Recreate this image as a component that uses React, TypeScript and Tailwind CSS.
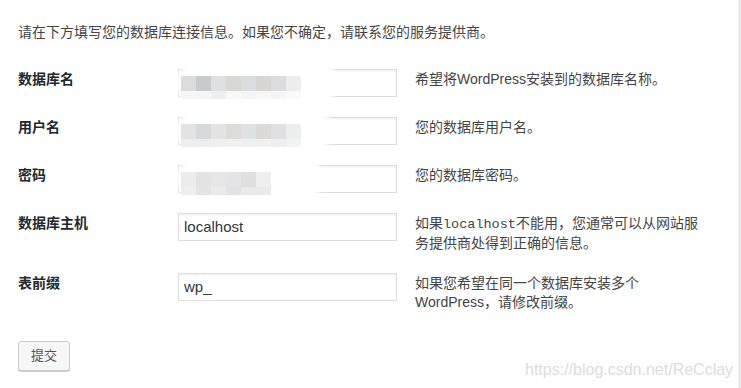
import React from 'react';

interface Field {
  id: number;
  label: string;
  value?: string;
  blur?: { cols: string[]; low: string[]; blob: number };
  desc: React.ReactNode;
}

const font = "font-['Liberation_Sans','Noto_Sans_CJK_SC',sans-serif]";

function BlurredValue({ cols, low, blob }: { cols: string[]; low: string[]; blob: number }) {
  return (
    <>
      {/* white smear over the border */}
      <div
        className="absolute -left-[3px] -top-[6px] h-[38px] rounded-full bg-white blur-[2px]"
        style={{ width: blob }}
      />
      <div className="absolute left-[2px] top-[6px] flex flex-col">
        <div className="flex">
          {cols.map((c, i) => (
            <span key={i} className="h-[15px] w-[15px]" style={{ background: c }} />
          ))}
        </div>
        <div className="flex">
          {low.map((c, i) => (
            <span key={i} className="h-[8px] w-[15px]" style={{ background: c }} />
          ))}
        </div>
      </div>
    </>
  );
}

export default function App() {
  const fields: Field[] = [
    {
      id: 1,
      label: '数据库名',
      blur: {
        cols: ['#dcdcdc', '#c8cbce', '#e0e0e0', '#d8d8d4', '#d9dde0', '#d9d5d5', '#dcdce0', '#ecedec'],
        low: ['#f6f6f6', '#f5f5f5', '#eeeeee', '#f8f8f8', '#f4f4f4', '#f7f7f7', '#f5f5f5', '#fafafa'],
        blob: 163,
      },
      desc: '希望将WordPress安装到的数据库名称。',
    },
    {
      id: 2,
      label: '用户名',
      blur: {
        cols: ['#e3e3e3', '#d5dadb', '#e3e3e3', '#dcdcd8', '#dde2e3', '#ddd9d9', '#dfdfe4', '#eceeed'],
        low: ['#eeeeee', '#ebedee', '#efefef', '#f0f0f0', '#eeeff0', '#f0f0f0', '#eeeeef', '#f3f3f3'],
        blob: 158,
      },
      desc: '您的数据库用户名。',
    },
    {
      id: 3,
      label: '密码',
      blur: {
        cols: ['#ececec', '#e3e3e3', '#e6e6e6', '#e4e4e4', '#dfdfdf', '#efefef'],
        low: ['#eeeeee', '#e4e4e6', '#ebeae8', '#e1e2e6', '#eae9ec', '#e9e9eb'],
        blob: 148,
      },
      desc: '您的数据库密码。',
    },
    {
      id: 4,
      label: '数据库主机',
      value: 'localhost',
      desc: (
        <>
          如果<code className="font-['Liberation_Mono',monospace] text-[13.5px]">localhost</code>
          不能用，您通常可以从网站服务提供商处得到正确的信息。
        </>
      ),
    },
    {
      id: 5,
      label: '表前缀',
      value: 'wp_',
      desc: '如果您希望在同一个数据库安装多个WordPress，请修改前缀。',
    },
  ];

  return (
    <div className={`relative h-[388px] w-[741px] overflow-hidden bg-white ${font}`}>
      <div className="h-full border-r-[3px] border-[#ebebeb] pl-[18px] pt-[22px]">
        {/* Intro */}
        <p className="text-[14px] leading-[20px] text-[#444]">
          请在下方填写您的数据库连接信息。如果您不确定，请联系您的服务提供商。
        </p>

        {/* Form rows */}
        <div className="mt-[27px] flex flex-col gap-[20px]">
          {fields.map((f) => (
            <div key={f.id} className="flex items-start">
              <label className="w-[160px] text-[14px] font-bold leading-[20px] text-[#23282d]">
                {f.label}
              </label>
              <div className="relative h-[28px] w-[219px] border border-[#dddddd] bg-white shadow-[inset_0_1px_2px_rgba(0,0,0,0.07)]">
                {f.blur && <BlurredValue {...f.blur} />}
                {f.value && (
                  <span className="absolute left-[5px] top-[3px] text-[15px] leading-[20px] text-[#32373c]">
                    {f.value}
                  </span>
                )}
              </div>
              <p className="ml-[18px] mt-[1px] w-[284px] text-[14px] leading-[19px] text-[#444]">{f.desc}</p>
            </div>
          ))}
        </div>

        {/* Submit */}
        <button className="mt-[29px] h-[30px] w-[52px] rounded-[3px] border border-[#cccccc] bg-[#f7f7f7] text-[13px] text-[#555] shadow-[0_1px_0_#cccccc]">
          提交
        </button>
      </div>

      {/* watermark */}
      <span className="absolute left-[525px] top-[360px] font-['Liberation_Sans',sans-serif] text-[16px] leading-[20px] text-[#dcdcdc]">
        https://blog.csdn.net/ReCclay
      </span>
    </div>
  );
}
